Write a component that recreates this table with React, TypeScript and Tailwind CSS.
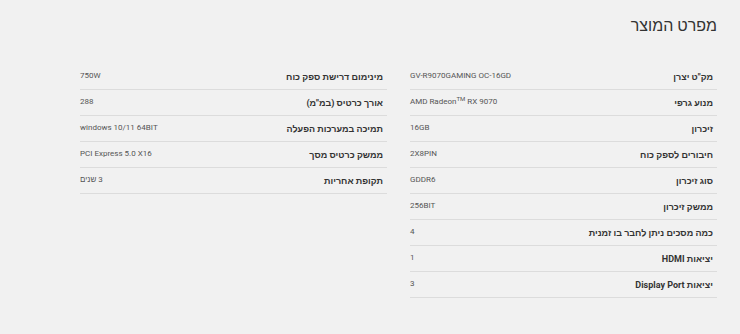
import React from 'react';

type Spec = { label: string; value: React.ReactNode };

// * Data
const rightSpecs: Spec[] = [
  { label: 'מק"ט יצרן', value: 'GV-R9070GAMING OC-16GD' },
  {
    label: 'מנוע גרפי',
    value: (
      <>
        AMD Radeon<sup className="text-[6px]">TM</sup> RX 9070
      </>
    ),
  },
  { label: 'זיכרון', value: '16GB' },
  { label: 'חיבורים לספק כוח', value: '2X8PIN' },
  { label: 'סוג זיכרון', value: 'GDDR6' },
  { label: 'ממשק זיכרון', value: '256BIT' },
  { label: 'כמה מסכים ניתן לחבר בו זמנית', value: '4' },
  { label: 'יציאות HDMI', value: '1' },
  { label: 'יציאות Display Port', value: '3' },
];

const leftSpecs: Spec[] = [
  { label: 'מינימום דרישת ספק כוח', value: '750W' },
  { label: 'אורך כרטיס (במ"מ)', value: '288' },
  { label: 'תמיכה במערכות הפעלה', value: 'windows 10/11 64BIT' },
  { label: 'ממשק כרטיס מסך', value: 'PCI Express 5.0 X16' },
  { label: 'תקופת אחריות', value: '3 שנים' },
];

function SpecTable({ specs }: { specs: Spec[] }) {
  return (
    <ul className="flex flex-col">
      {specs.map((s) => (
        <li
          key={s.label}
          className="flex h-[26px] items-center justify-between border-b border-[#dcdcdc] pr-1"
        >
          <span className="mt-0.5 text-[9px] font-bold text-[#333]">{s.label}</span>
          <span className="-mt-0.5 text-[8px] text-[#555]">{s.value}</span>
        </li>
      ))}
    </ul>
  );
}

export default function App() {
  return (
    <div
      dir="rtl"
      className="h-[334px] w-[740px] bg-[#f1f1f1] pl-[80px] pr-[23px] pt-[14px]"
      style={{ fontFamily: "Roboto, 'Liberation Sans', sans-serif" }}
    >
      {/* Title */}
      <h2 className="h-[35px] text-[16px] leading-[24px] text-[#333]">מפרט המוצר</h2>

      {/* Spec columns */}
      <div className="mt-[15px] grid grid-cols-2 gap-[23px]">
        <SpecTable specs={rightSpecs} />
        <SpecTable specs={leftSpecs} />
      </div>
    </div>
  );
}
